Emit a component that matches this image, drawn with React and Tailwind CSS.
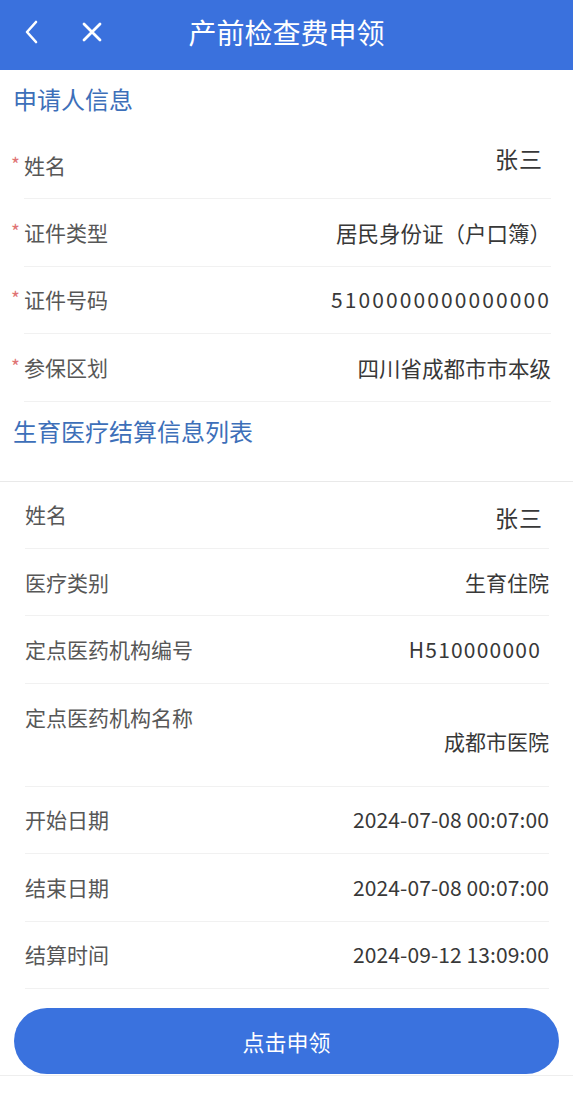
import React from "react";

const applicant = [
    { label: "姓名", value: "张三", tweak: "mb-[14px] mr-[8px] text-[23px] tracking-[1px]" },
    { label: "证件类型", value: "居民身份证（户口簿）", tweak: "text-[21.5px]" },
    { label: "证件号码", value: "5100000000000000", tweak: "text-[21px] tracking-[2.1px] mr-[0px]" },
    { label: "参保区划", value: "四川省成都市市本级", tweak: "text-[21.5px]" },
];

const settlement = [
    { label: "姓名", value: "张三", tweak: "mt-[6px] mr-[6px] text-[23px] tracking-[1px]" },
    { label: "医疗类别", value: "生育住院", tweak: "text-[21px]" },
    { label: "定点医药机构编号", value: "H510000000", tweak: "text-[21px] mr-[8px] tracking-[1.2px]" },
    { label: "定点医药机构名称", value: "成都市医院", tall: true },
    { label: "开始日期", value: "2024-07-08 00:07:00", tweak: "text-[21px] tracking-[0.1px]" },
    { label: "结束日期", value: "2024-07-08 00:07:00", tweak: "text-[21px] tracking-[0.1px]" },
    { label: "结算时间", value: "2024-09-12 13:09:00", tweak: "text-[21px] tracking-[0.1px]" },
];

const font = { fontFamily: '"Noto Sans CJK SC", "Noto Sans", sans-serif' };

const SectionTitle = ({ children, className }) => (
    <div className={`px-[13px] text-[24px] leading-none text-[#3d6fb9] ${className}`}>
        {children}
    </div>
);

const App = () => {
    return (
        <div style={font} className="w-[573px] min-h-[1096px] bg-white flex flex-col">
            {/* header */}
            <div className="h-[70px] bg-[#3a71dd] flex items-center pb-[6px] relative">
                <button className="ml-[20px] w-[22px] h-[30px] flex items-center justify-center">
                    <svg width="14" height="24" viewBox="0 0 14 24" fill="none">
                        <path d="M12 2 L3 12 L12 22" stroke="white" strokeWidth="2.6" strokeLinecap="round" strokeLinejoin="round" />
                    </svg>
                </button>
                <button className="ml-[38px] w-[24px] h-[24px] flex items-center justify-center">
                    <svg width="20" height="20" viewBox="0 0 20 20" fill="none">
                        <path d="M2 2 L18 18 M18 2 L2 18" stroke="white" strokeWidth="2.8" strokeLinecap="round" />
                    </svg>
                </button>
                <h1 className="absolute left-0 right-0 top-[18px] text-center text-white text-[28px] leading-none pointer-events-none">
                    产前检查费申领
                </h1>
            </div>

            {/* applicant */}
            <div className="h-[62px] flex items-center">
                <SectionTitle className="-mt-[4px]">申请人信息</SectionTitle>
            </div>
            <div className="flex flex-col">
                {applicant.map((item) => (
                    <div
                        key={item.label}
                        className="h-[67.4px] ml-[24px] mr-[22px] flex items-center justify-between border-b border-[#f1f1f1]"
                    >
                        <span className="text-[21px] text-[#575757] leading-none flex items-center">
                            <span className="-ml-[13px] w-[13px] text-[19px] leading-none -mt-[4px] text-[#e07474]">*</span>
                            {item.label}
                        </span>
                        <span className={`text-[#383838] leading-none ${item.tweak}`}>
                            {item.value}
                        </span>
                    </div>
                ))}
            </div>

            {/* settlement list */}
            <div className="h-[80px] flex items-start pt-[17px] border-b border-[#e9e9e9]">
                <SectionTitle>生育医疗结算信息列表</SectionTitle>
            </div>
            <div className="flex flex-col">
                {settlement.map((item) =>
                    item.tall ? (
                        <div
                            key={item.label}
                            className="h-[103px] ml-[25px] mr-[24px] flex flex-col border-b border-[#f1f1f1]"
                        >
                            <span className="mt-[23px] text-[21px] text-[#575757] leading-none">{item.label}</span>
                            <span className="mt-[3px] self-end text-[21px] text-[#383838] leading-none">{item.value}</span>
                        </div>
                    ) : (
                        <div
                            key={item.label}
                            className="h-[67.4px] ml-[25px] mr-[24px] flex items-center justify-between border-b border-[#f1f1f1]"
                        >
                            <span className="text-[21px] text-[#575757] leading-none">{item.label}</span>
                            <span className={`text-[#383838] leading-none ${item.tweak}`}>
                                {item.value}
                            </span>
                        </div>
                    )
                )}
            </div>

            {/* submit */}
            <div className="pt-[19px] pb-[1px] border-b border-[#eeeeee]">
                <button className="mx-[14px] w-[545px] h-[66px] rounded-full bg-[#3a72de] text-white text-[22px] leading-none">
                    点击申领
                </button>
            </div>
        </div>
    );
};

export default App;
